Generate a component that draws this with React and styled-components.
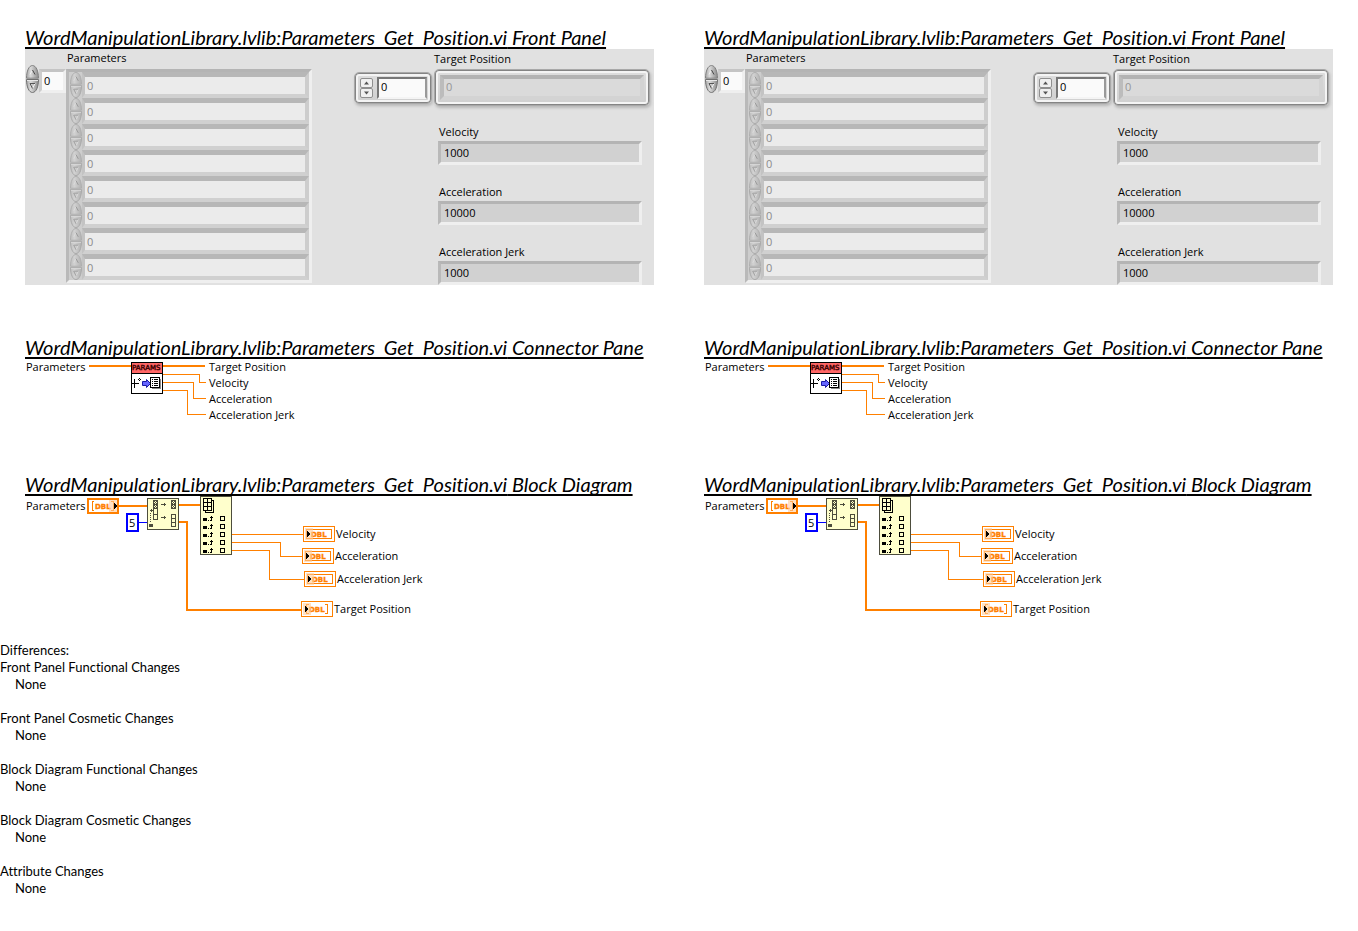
import React, { useId } from "react";
import styled, { createGlobalStyle } from "styled-components";

const ORANGE = "#ff8000";

const GlobalStyle = createGlobalStyle`
  * { box-sizing: border-box; }
  body {
    margin: 0;
    background: #fff;
    color: #000;
    font: 11px/16px "Open Sans", "Noto Sans", sans-serif;
  }
  input, button { font: inherit; color: inherit; margin: 0; }
`;

const Columns = styled.main`
  display: grid;
  grid-template-columns: 1fr 1fr;
  padding-top: 24px;
`;

const Report = styled.article`
  padding: 0 25px;
  min-width: 0;
`;

const Section = styled.section`
  min-height: ${(p) => p.$min}px;
`;

const Heading = styled.h2`
  margin: 0;
  height: 25px;
  font: italic 400 20px/26px Lato, sans-serif;
  font-variant-ligatures: none;
  white-space: nowrap;
  text-decoration: underline;
  text-decoration-thickness: 2px;
  text-decoration-skip-ink: none;
  text-underline-offset: 2px;
`;

const Panel = styled.div`
  display: flex;
  align-items: flex-start;
  background: #e1e1e1;
`;

const bevel = `
  border: 3px solid;
  border-color: #b4b4b4 #efefef #efefef #b9b9b9;
`;

const IndexControl = styled.div`
  display: flex;
  align-items: flex-end;
  margin: 16px 0 0 1px;
`;

const IndexInput = styled.input`
  width: 27px;
  height: 24px;
  padding: 0 2px 2px;
  border: 3px solid;
  border-color: #c4c4c4 #efefef #efefef #cdcdcd;
  border-radius: 0;
  background: #fafafa;
`;

const ArrayColumn = styled.div`
  width: 246px;
`;

const ArrayLabel = styled.div`
  height: 20px;
  padding-left: 1px;
  line-height: 18px;
`;

const ArrayFrame = styled.div`
  ${bevel}
  padding-left: 1px;
  background: #cdcdcd;
`;

const ArrayRow = styled.div`
  display: flex;
  height: 26px;
`;

const ArrayInput = styled.input`
  flex: 1;
  min-width: 0;
  padding: 0 2px;
  border: solid;
  border-width: 5px 4px 4px 3px;
  border-color: #b7b7b7 #cdcdcd #d0d0d0 #c3c3c3;
  border-radius: 0;
  background: #ebebeb;
  color: #8c8c8c;
`;

const SpinnerBox = styled.div`
  display: flex;
  flex-direction: column;
  flex: none;
  opacity: ${(p) => (p.$dim ? 0.4 : 1)};
`;

const SpinButton = styled.button`
  display: block;
  padding: 0;
  border: 0;
  background: none;
  line-height: 0;
`;

const Outputs = styled.div`
  flex: 1;
  margin: 0 4px 0 42px;
`;

const TargetLabel = styled.label`
  display: block;
  height: 20px;
  padding: 2px 0 0 80px;
`;

const TargetRow = styled.div`
  display: flex;
  align-items: center;
  gap: 2px;
  height: 37px;
  margin-bottom: 18px;
`;

const Plate = styled.div`
  display: flex;
  align-items: center;
  border: 1px solid #a8a8a8;
  border-radius: 5px;
  background: linear-gradient(#dedede, #cfcfcf);
  box-shadow: inset 0 0 0 1px #848484, inset 0 0 0 3px #f4f4f4, 1px 2px 3px #b8b8b8;
`;

const IndexPlate = styled(Plate)`
  width: 78px;
  height: 32px;
  padding: 0 5px;
  gap: 4px;
`;

const ValuePlate = styled(Plate)`
  flex: 1;
  height: 37px;
  padding: 0 5px;
`;

const PlateIndexInput = styled.input`
  width: 50px;
  height: 22px;
  padding: 0 2px 2px;
  border: 2px solid;
  border-color: #777 #999 #f4f4f4 #777;
  border-radius: 0;
  background: #fafafa;
`;

const PlateValueInput = styled.input`
  width: 100%;
  height: 25px;
  padding: 0 2px 2px;
  border: 4px solid;
  border-color: #b3b3b3 #d3d3d3 #d3d3d3 #bcbcbc;
  border-radius: 0;
  background: #dadada;
  color: #969696;
`;

const SquareButton = styled.button`
  display: block;
  width: 13px;
  height: 10px;
  padding: 0;
  border: 1px solid #8f8f8f;
  border-radius: 2px;
  background: #f0f0f0;
  line-height: 0;
`;

const Indicator = styled.div`
  display: flex;
  flex-direction: column;
  margin: 0 8px 19px 84px;
  &:last-child { margin-bottom: 0; }
`;

const IndicatorLabel = styled.label`
  height: 17px;
  padding-left: 1px;
`;

const IndicatorInput = styled.input`
  width: 100%;
  height: 24px;
  padding: 0 3px 2px;
  ${bevel}
  border-radius: 0;
  background: #d1d1d1;
`;

const Connector = styled.div`
  display: flex;
  align-items: flex-start;
  padding-left: 1px;
`;

const InputName = styled.span`
  width: 62px;
`;

const OutputNames = styled.ul`
  margin: 0 0 0 2px;
  padding: 0;
  list-style: none;
`;

const Canvas = styled.div`
  position: relative;
  height: 122px;
`;

const Wires = styled.svg`
  display: block;
`;

const NodeLabel = styled.span`
  position: absolute;
  left: ${(p) => p.$x}px;
  top: ${(p) => p.$y}px;
  white-space: nowrap;
`;

const PixelText = styled.text`
  font: ${(p) => (p.$bold ? 700 : 400)} 7px "DejaVu Sans", sans-serif;
  fill: ${(p) => p.$color};
  stroke: ${(p) => p.$color};
  stroke-width: 0.4px;
`;

const Differences = styled.section`
  padding-top: 24px;
  font: 400 13px/17px Lato, sans-serif;
  font-variant-ligatures: none;
`;

const DiffTitle = styled.h2`
  margin: 0;
  font: inherit;
`;

const DiffGroup = styled.div`
  margin-bottom: 17px;
`;

const DiffName = styled.h3`
  margin: 0;
  font: inherit;
`;

const DiffValue = styled.p`
  margin: 0;
  padding-left: 15px;
`;

function OvalSpinner({ width, height, dim }) {
  const shade = useId();
  const box = { width, height: height / 2, preserveAspectRatio: "none" };
  return (
    <SpinnerBox $dim={dim}>
      <SpinButton type="button" aria-label="Increase" disabled={dim}>
        <svg {...box} viewBox="0 0 13 14">
          <defs>
            <linearGradient id={shade}>
              <stop offset="0" stopColor="#a8a8a8" />
              <stop offset="0.35" stopColor="#dadada" />
              <stop offset="1" stopColor="#8a8a8a" />
            </linearGradient>
          </defs>
          <path d="M0.5 13.2C0.5 6 3 0.5 6.500 0.5S12.500 6 12.500 13.2Z" fill={`url(#${shade})`} stroke="#808080" />
          <path d="M4 9.500L6.500 5" fill="none" stroke="#f2f2f2" />
          <path d="M6.500 5L9 9.500" fill="none" stroke="#444" />
        </svg>
      </SpinButton>
      <SpinButton type="button" aria-label="Decrease" disabled={dim}>
        <svg {...box} viewBox="0 0 13 14">
          <path d="M0.5 0.5C0.5 8 3 13.500 6.500 13.500S12.500 8 12.500 0.5Z" fill={`url(#${shade})`} stroke="#707070" />
          <path d="M1 1.500H12" stroke="#e8e8e8" />
          <path d="M9 4.500L6.500 9.500" fill="none" stroke="#f2f2f2" />
          <path d="M9 4.500H4L6.500 9.500" fill="none" stroke="#555" />
        </svg>
      </SpinButton>
    </SpinnerBox>
  );
}

function SquareSpinner() {
  return (
    <SpinnerBox>
      <SquareButton type="button" aria-label="Next element">
        <svg width="11" height="8"><path d="M3 5.500L5.500 2.500L8 5.500Z" fill="#555" /></svg>
      </SquareButton>
      <SquareButton type="button" aria-label="Previous element">
        <svg width="11" height="8"><path d="M3 2.500L5.500 5.500L8 2.500Z" fill="#555" /></svg>
      </SquareButton>
    </SpinnerBox>
  );
}

const INDICATORS = [
  ["Velocity", "1000"],
  ["Acceleration", "10000"],
  ["Acceleration Jerk", "1000"],
];

function FrontPanel({ side }) {
  return (
    <Panel>
      <IndexControl>
        <OvalSpinner width={13} height={28} />
        <IndexInput aria-label="Parameters index" defaultValue="0" />
      </IndexControl>
      <ArrayColumn>
        <ArrayLabel>Parameters</ArrayLabel>
        <ArrayFrame>
          {Array.from({ length: 8 }, (_, i) => (
            <ArrayRow key={i}>
              <OvalSpinner width={12} height={26} dim />
              <ArrayInput aria-label={`Parameters ${i}`} defaultValue="0" disabled />
            </ArrayRow>
          ))}
        </ArrayFrame>
      </ArrayColumn>
      <Outputs>
        <TargetLabel htmlFor={`${side}-target`}>Target Position</TargetLabel>
        <TargetRow>
          <IndexPlate>
            <SquareSpinner />
            <PlateIndexInput aria-label="Target Position index" defaultValue="0" />
          </IndexPlate>
          <ValuePlate>
            <PlateValueInput id={`${side}-target`} defaultValue="0" disabled />
          </ValuePlate>
        </TargetRow>
        {INDICATORS.map(([name, value], i) => (
          <Indicator key={name}>
            <IndicatorLabel htmlFor={`${side}-ind-${i}`}>{name}</IndicatorLabel>
            <IndicatorInput id={`${side}-ind-${i}`} defaultValue={value} readOnly />
          </Indicator>
        ))}
      </Outputs>
    </Panel>
  );
}

function ConnectorPane() {
  return (
    <Connector>
      <InputName>Parameters</InputName>
      <Wires width="119" height="60" viewBox="88 359 119 60" shapeRendering="crispEdges">
        <g fill="none" stroke={ORANGE}>
          <path d="M89 366H131M163 366H205" strokeWidth="2" />
          <path d="M163 374.5H199.5V382.5H206M163 382.5H193.5V398.5H206M163 390.5H187.5V414.5H206" />
        </g>
        <rect x="131.5" y="362.5" width="31" height="31" fill="#fff" stroke="#000" />
        <rect x="132" y="363" width="30" height="10" fill="#ff6666" />
        <path d="M132 373.5H162" stroke="#000" />
        <PixelText x="132" y="370" $color="#300">PARAMS</PixelText>
        <path d="M134.5 379V388M132 383.5H139" stroke="#000" />
        <path d="M139 378h1v1h1v1h-1v1h-1v-1h-1v-1h1z" fill="#000" />
        <path d="M139 379h1v1h-1z" fill="#fff" />
        <path d="M142.500 381.500H146.500V379.500L150.500 383.500L146.500 387.500V385.500H142.500Z" fill="#6666ff" stroke="#1a1aa6" shapeRendering="auto" />
        <path d="M152 388.500H160.500V379" fill="none" stroke="#888" />
        <rect x="150.500" y="377.500" width="9" height="10" fill="#fff" stroke="#000" />
        <path d="M152 379.500h1m1 0h4M152 381.500h1m1 0h4M152 383.500h1m1 0h4M152 385.500h1m1 0h4" stroke="#000" />
      </Wires>
      <OutputNames>
        <li>Target Position</li>
        <li>Velocity</li>
        <li>Acceleration</li>
        <li>Acceleration Jerk</li>
      </OutputNames>
    </Connector>
  );
}

function Terminal({ x, y, array }) {
  return (
    <g transform={`translate(${x} ${y})`}>
      <rect x="0.5" y="0.5" width="31" height="15" fill="#fff" stroke={ORANGE} />
      {array ? (
        <path d="M8 3.500H5.500V12.500H8M24 3.500H26.500V12.500H24" fill="none" stroke={ORANGE} />
      ) : (
        <rect x="3.500" y="3.500" width="25" height="9" fill="none" stroke={ORANGE} />
      )}
      <PixelText x="8" y="11" $bold $color={ORANGE}>DBL</PixelText>
      <rect x="2" y="2" width="8" height="12" fill="#ffcc99" fillOpacity="0.6" />
      <path d="M4 4.500V11.500L7.500 8Z" fill="#000" />
    </g>
  );
}

function BlockDiagram() {
  return (
    <Canvas>
      <Wires width="320" height="122" viewBox="25 496 320 122" shapeRendering="crispEdges">
        <g fill="none" stroke={ORANGE}>
          <path d="M119 506H147M179 505H200M179 522H187V609.500H301" strokeWidth="2" />
          <path d="M232 534.500H303M232 542.500H280.500V556.500H302M232 550.500H269.500V579.500H304" />
        </g>
        <path d="M139 522.500H147" stroke="#0000ff" />

        <rect x="88" y="499" width="30" height="14" fill="#fff" stroke={ORANGE} strokeWidth="2" />
        <path d="M94 501.500H92.500V510.500H94M111 501.500H113.500V510.500H111" fill="none" stroke={ORANGE} />
        <PixelText x="95" y="509" $bold $color={ORANGE}>DBL</PixelText>
        <rect x="109" y="500" width="8" height="12" fill="#ffcc99" fillOpacity="0.6" />
        <path d="M114 502.500V509.500L117.500 506Z" fill="#000" />

        <rect x="127" y="514" width="11" height="17" fill="#fff" stroke="#0000ff" strokeWidth="2" />

        <rect x="147.500" y="498.500" width="31" height="31" fill="#ffffcc" stroke="#4d4d3d" />
        <g fill="none" stroke="#4d4d3d">
          <path d="M153.500 500.500h4v19h-4zM153.500 504.500h4M153.500 508.500h4M153.500 514.500h4" />
          <path d="M171.500 500.500h4v8h-4zM171.500 504.500h4" />
          <path d="M171.500 514.500h4v12h-4zM171.500 518.500h4M171.500 522.500h4" />
          <path d="M161 504.500h5M164.500 503v3M161 517.500h5M164.500 516v3" />
          <path d="M150 510.500h3M151.500 509v3" />
          <path d="M150.500 513v10" strokeDasharray="1 1" />
          <path d="M154 501.500h1m1 0h1M155 502.500h1M154 503.500h1m1 0h1M154 505.500h1m1 0h1M155 506.500h1M154 507.500h1m1 0h1" />
          <path d="M172 501.500h1m1 0h1M173 502.500h1M172 503.500h1m1 0h1M172 505.500h1m1 0h1M173 506.500h1M172 507.500h1m1 0h1" />
        </g>
        <rect x="149" y="524" width="4" height="3" fill="#4d4d3d" />

        <rect x="200.500" y="496.500" width="31" height="58" fill="#ffffcc" stroke="#4d4d3d" />
        <g fill="#ffffcc" stroke="#000">
          <path d="M205.500 500.500h8v12h-8z" />
          <path d="M203.500 498.500h8v12h-8zM207.500 498.500v12M203.500 502.500h8M203.500 506.500h8" />
        </g>
        {[518, 526, 534, 542, 550].map((y) => (
          <g key={y}>
            <path d={`M203 ${y}h4v3h-4zM208 ${y + 2}h1v1h-1zM210 ${y + 2}h1v-2h-1v-1h1v-1h1v1h1v1h-1v3h-2z`} fill="#000" />
            <rect x="220.500" y={y - 1.5} width="4" height="4" fill="#ffffcc" stroke="#000" />
          </g>
        ))}

        <Terminal x={303} y={526} />
        <Terminal x={302} y={548} />
        <Terminal x={304} y={571} />
        <Terminal x={301} y={601} array />
      </Wires>
      <NodeLabel $x={1} $y={2}>Parameters</NodeLabel>
      <NodeLabel $x={104} $y={19}>5</NodeLabel>
      <NodeLabel $x={311} $y={30}>Velocity</NodeLabel>
      <NodeLabel $x={310} $y={52}>Acceleration</NodeLabel>
      <NodeLabel $x={312} $y={75}>Acceleration Jerk</NodeLabel>
      <NodeLabel $x={309} $y={105}>Target Position</NodeLabel>
    </Canvas>
  );
}

const VI_NAME = "WordManipulationLibrary.lvlib:Parameters_Get_Position.vi";

function ViReport({ side }) {
  return (
    <Report>
      <Section $min={310}>
        <Heading>{VI_NAME} Front Panel</Heading>
        <FrontPanel side={side} />
      </Section>
      <Section $min={137}>
        <Heading>{VI_NAME} Connector Pane</Heading>
        <ConnectorPane />
      </Section>
      <Section $min={147}>
        <Heading>{VI_NAME} Block Diagram</Heading>
        <BlockDiagram />
      </Section>
    </Report>
  );
}

const CHANGES = [
  "Front Panel Functional Changes",
  "Front Panel Cosmetic Changes",
  "Block Diagram Functional Changes",
  "Block Diagram Cosmetic Changes",
  "Attribute Changes",
];

export default function App() {
  return (
    <>
      <GlobalStyle />
      <Columns>
        <ViReport side="left" />
        <ViReport side="right" />
      </Columns>
      <Differences>
        <DiffTitle>Differences:</DiffTitle>
        {CHANGES.map((name) => (
          <DiffGroup key={name}>
            <DiffName>{name}</DiffName>
            <DiffValue>None</DiffValue>
          </DiffGroup>
        ))}
      </Differences>
    </>
  );
}
